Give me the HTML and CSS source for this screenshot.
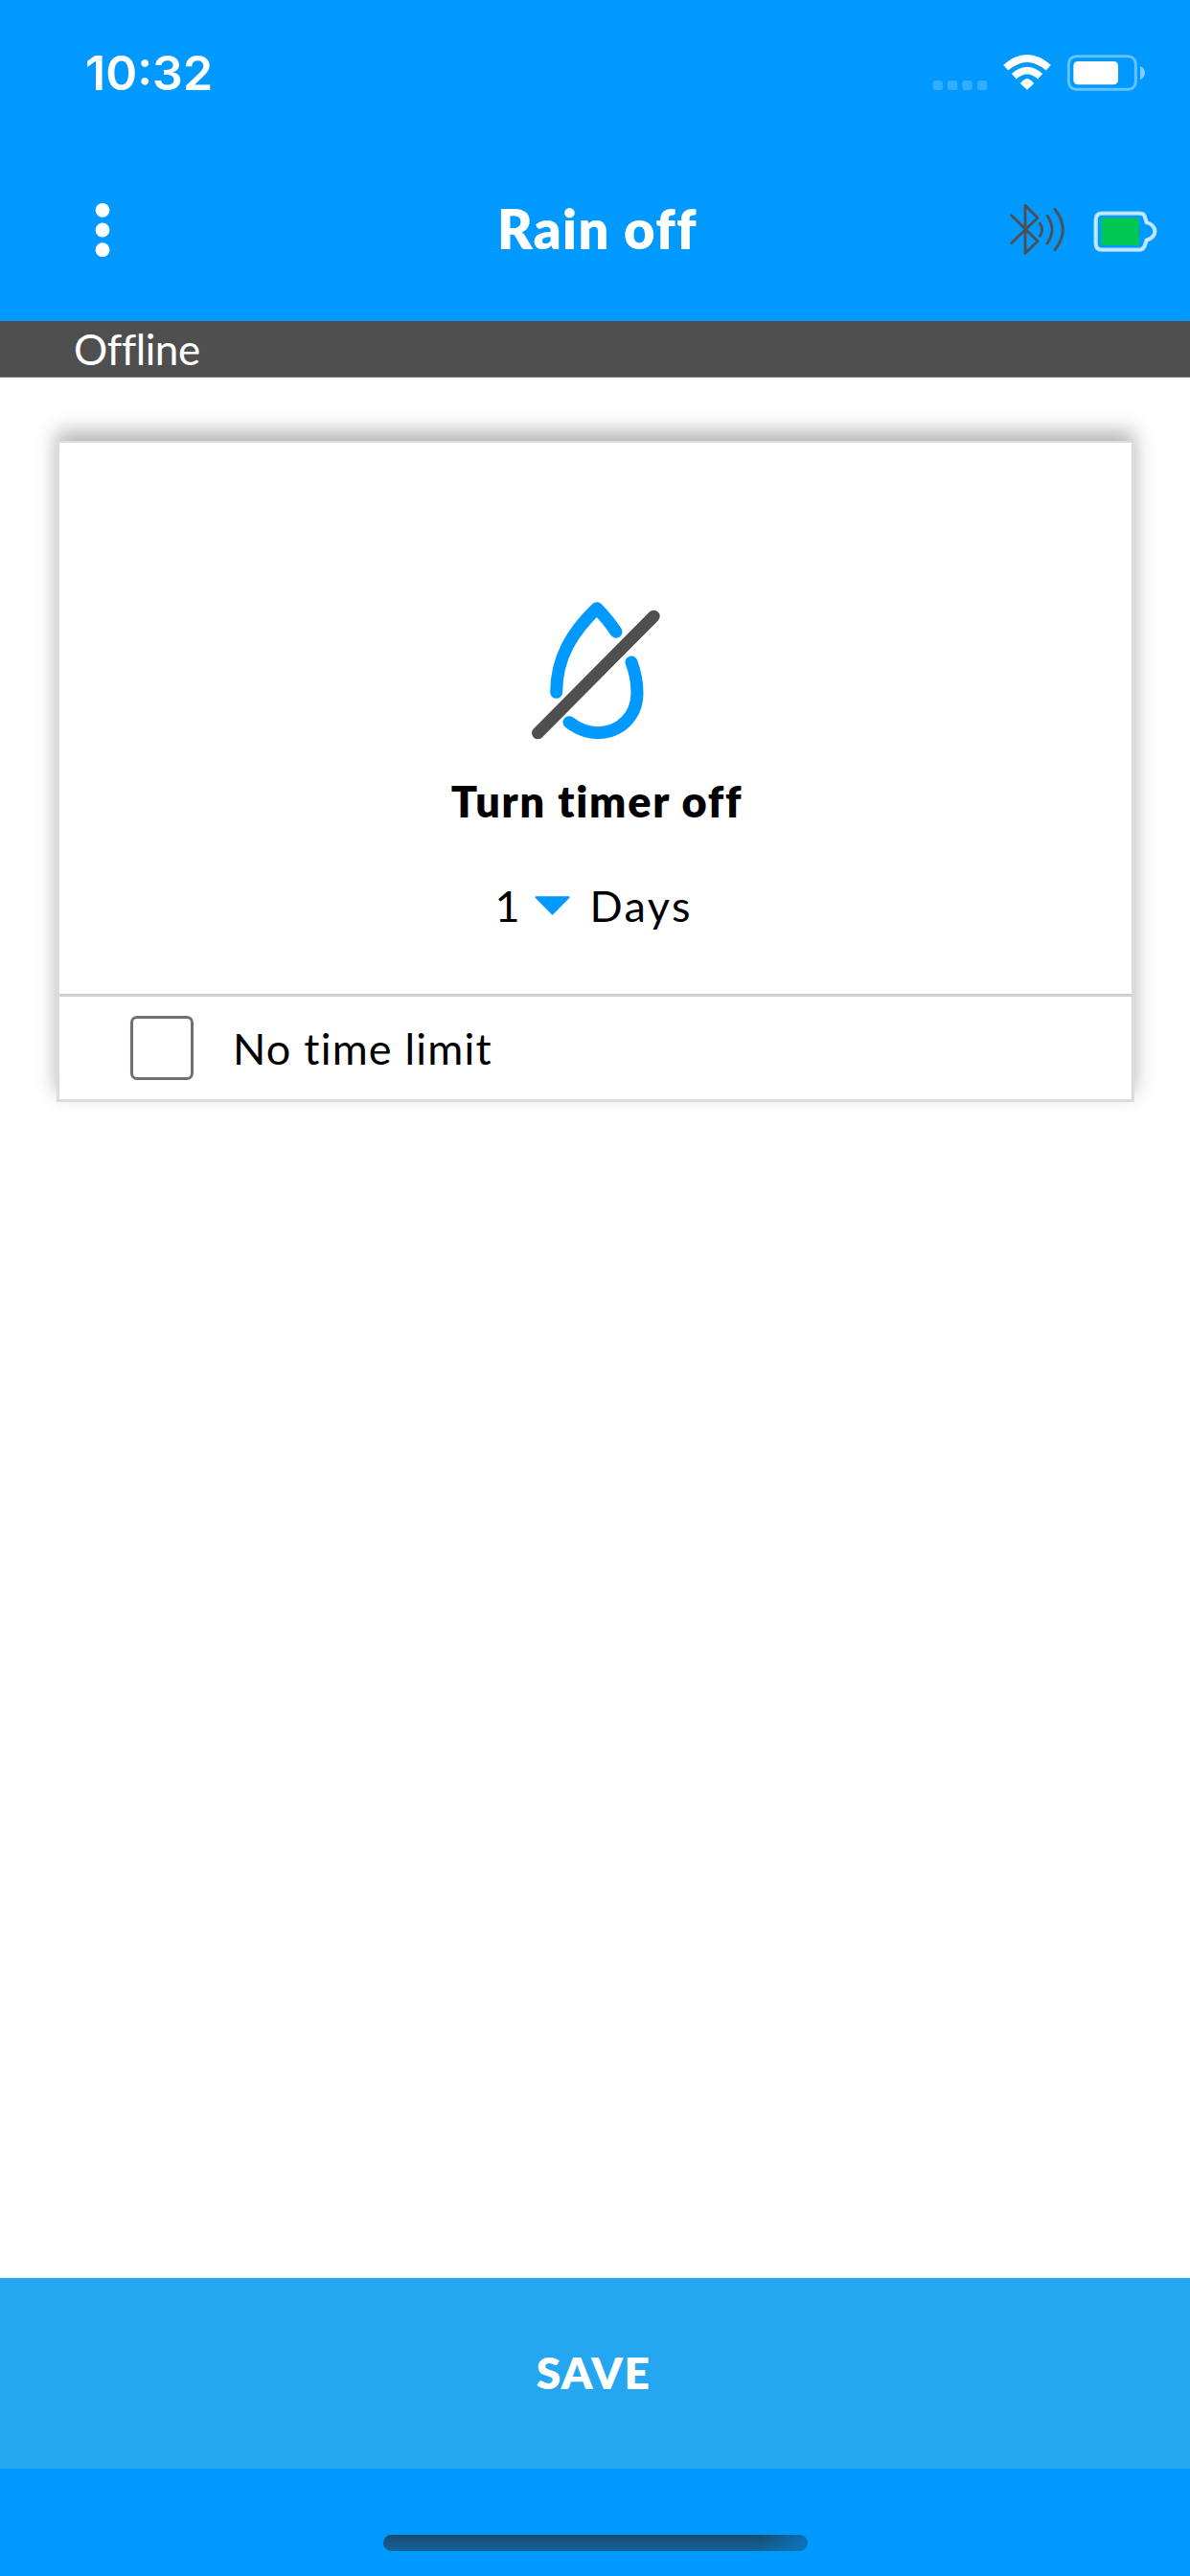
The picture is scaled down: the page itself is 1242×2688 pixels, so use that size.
FILE: index.html
```html
<!DOCTYPE html>
<html lang="en">
<head>
<meta charset="utf-8">
<title>Rain off</title>
<link rel="stylesheet" href="styles.css">
</head>
<body>
<div class="screen">
  <header class="header">
    <div class="status-bar">
      <span class="clock">10:32</span>
      <svg class="status-icons" viewBox="0 0 906 150" aria-hidden="true">
        <g fill="#fff" fill-opacity=".2">
          <rect x="101" y="72" width="31" height="30" rx="8"/>
          <rect x="147" y="72" width="31" height="30" rx="8"/>
          <rect x="193" y="72" width="31" height="30" rx="8"/>
          <rect x="240" y="72" width="31" height="30" rx="8"/>
        </g>
        <g fill="none" stroke="#fff">
          <path d="M329 32Q396 -26 463 32" stroke-width="23"/>
          <path d="M355 59Q396 23 437 59" stroke-width="22"/>
        </g>
        <path d="M376 81Q396 54 416 81L396 100Z" fill="#fff" stroke="#fff" stroke-width="3" stroke-linejoin="round"/>
        <rect x="526" y="-4" width="210" height="104" rx="24" fill="none" stroke="#fff" stroke-opacity=".4" stroke-width="9"/>
        <rect x="541" y="12" width="140" height="73" rx="14" fill="#fff"/>
        <path d="M750 27Q765 34 765 48Q765 63 750 70Z" fill="#fff" fill-opacity=".5"/>
      </svg>
    </div>
    <div class="nav-bar">
      <svg class="menu-icon" viewBox="0 0 20 60" aria-hidden="true">
        <g fill="#fff"><circle cx="10" cy="9.3" r="7.4"/><circle cx="10" cy="30" r="7.4"/><circle cx="10" cy="50.7" r="7.4"/></g>
      </svg>
      <h1 class="title">Rain off</h1>
      <svg class="device-icons" viewBox="0 0 480 180" aria-hidden="true">
        <g fill="none" stroke="#4f4f4f" stroke-width="8.5" stroke-linecap="round" stroke-linejoin="round">
          <path d="M23 44L105 125L66 163V13L105 52L23 131"/>
          <path d="M112 69Q125 89 112 109"/>
          <path d="M135 45Q165 89 135 132"/>
          <path d="M159 25Q209 89 159 152"/>
        </g>
        <path d="M307 38H424Q437 38 440 47L446 66Q472 74 472 94Q472 114 446 122L440 140Q434 152 424 152H307Q287 152 287 132V58Q287 38 307 38Z" fill="none" stroke="#a9dcff" stroke-width="13"/>
        <path d="M307 38H424Q437 38 440 47L446 66Q472 74 472 94Q472 114 446 122L440 140Q434 152 424 152H307Q287 152 287 132V58Q287 38 307 38Z" fill="none" stroke="#d0ecff" stroke-width="5"/>
        <rect x="304" y="52" width="118" height="86" fill="#00c853"/>
      </svg>
    </div>
  </header>
  <div class="offline"><span>Offline</span></div>
  <main class="content">
    <section class="card">
      <div class="timer">
        <svg class="drop-icon" viewBox="0 0 600 570" aria-hidden="true">
          <g fill="none" stroke="#0099ff" stroke-width="39" stroke-linecap="round" stroke-linejoin="round">
            <path d="M182 367C182 260 231 178 309 104Q346 142 369 178"/>
            <path d="M417 273Q435 320 435 369C435 441 382 494 311 494Q265 494 222 461"/>
          </g>
          <path d="M124 495L487 129" fill="none" stroke="#4f4f4f" stroke-width="38" stroke-linecap="round"/>
        </svg>
        <h2 class="timer-title">Turn timer off</h2>
        <div class="duration">
          <span class="amount">1</span>
          <svg class="caret" viewBox="0 0 37 20" aria-hidden="true"><path d="M1.5 1.2H35.5L18.5 18.5Z" fill="#0099ff" stroke="#0099ff" stroke-width="2" stroke-linejoin="round"/></svg>
          <span class="unit">Days</span>
        </div>
      </div>
      <div class="limit">
        <span class="checkbox"></span>
        <span class="limit-label">No time limit</span>
      </div>
    </section>
  </main>
  <footer class="footer">
    <div class="save"><span>SAVE</span></div>
    <div class="home-area"><div class="home-indicator"></div></div>
  </footer>
</div>
</body>
</html>
```
FILE: styles.css
```css
* { box-sizing: border-box; }

body {
  margin: 0;
  background: #fff;
  font-family: Lato, "Open Sans", sans-serif;
  font-variant-ligatures: none;
  color: #000;
}

svg { display: block; flex: none; }

span, h1, h2 { white-space: nowrap; }

.screen {
  width: 1242px;
  height: 2688px;
  display: flex;
  flex-direction: column;
}

.header {
  height: 335px;
  background: #0099ff;
}

.status-bar {
  height: 145px;
  padding: 48px 0 0 89px;
  display: flex;
  justify-content: space-between;
}

.clock {
  font: 600 50px/56px Inter, sans-serif;
  color: #fff;
}

.status-icons {
  width: 302px;
  height: 50px;
  margin-top: 12px;
  overflow: visible;
}

.nav-bar {
  height: 190px;
  padding: 0 40px 0 97px;
  display: grid;
  grid-template-columns: 103px 1fr 160px;
}

.menu-icon {
  width: 20px;
  height: 60px;
  margin-top: 65px;
}

.title {
  margin: 59px 0 0;
  padding-left: 5px;
  text-align: center;
  font-size: 56px;
  line-height: 70px;
  font-weight: 800;
  letter-spacing: 1.4px;
  color: #fff;
}

.device-icons {
  width: 160px;
  height: 60px;
  margin: 65px 0 0 6px;
}

.offline {
  height: 59px;
  padding-left: 77px;
  background: #4f4f4f;
  border-bottom: 1px solid #777;
  color: #fff;
  font-size: 44px;
  line-height: 58px;
  letter-spacing: -0.4px;
}

.content {
  flex: 1;
  padding: 66px 58px 0 59px;
}

.card {
  height: 690px;
  background: #fff;
  border: 3px solid #dcdcdc;
  border-top-width: 2px;
  box-shadow: 0 -10px 20px rgba(0, 0, 0, .3);
}

.timer {
  height: 578px;
  padding-top: 138px;
  border-bottom: 3px solid #d0d0d0;
  display: flex;
  flex-direction: column;
  align-items: center;
}

.drop-icon {
  width: 200px;
  height: 190px;
  margin-right: 3px;
}

.timer-title {
  margin: 18px 0 0;
  padding-left: 3px;
  font-size: 45px;
  line-height: 56px;
  font-weight: 800;
  letter-spacing: 1.8px;
}

.duration {
  margin-top: 53px;
  height: 56px;
  width: 210px;
  display: flex;
  font-size: 45px;
  line-height: 56px;
}

.amount { width: 41px; }

.caret {
  width: 37px;
  height: 20px;
  margin: 18px 21px 0 0;
}

.unit { letter-spacing: 2.4px; }

.limit {
  height: 107px;
  padding: 0 74px;
  display: flex;
  align-items: center;
  gap: 41px;
}

.checkbox {
  width: 66px;
  height: 67px;
  border: 3px solid #6d7078;
  border-radius: 7px;
}

.limit-label {
  font-size: 45px;
  line-height: 56px;
  letter-spacing: 1.2px;
}

.save {
  height: 199px;
  padding: 0 3px 3px 0;
  background: #24a6f1;
  display: flex;
  align-items: center;
  justify-content: center;
  color: #fff;
  font-size: 46px;
  font-weight: 800;
  letter-spacing: 1.5px;
}

.home-area {
  height: 112px;
  padding: 69px 0 0 400px;
  background: #0099ff;
}

.home-indicator {
  width: 443px;
  height: 17px;
  border-radius: 9px;
  background:
    linear-gradient(105deg, transparent 88%, rgba(10, 120, 200, .75) 98%),
    linear-gradient(#1a4b70, #12639a);
}
```
